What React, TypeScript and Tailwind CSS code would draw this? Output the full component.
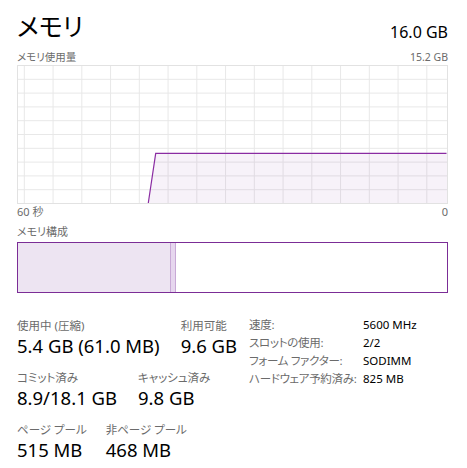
import React from "react";

const font = "font-['Noto_Sans','Noto_Sans_CJK_JP',sans-serif] [font-feature-settings:'palt']";

function Chart() {
  const W = 431;
  const H = 139;
  const hLines = Array.from({ length: 11 }, (_, i) => 0.5 + i * 13.8);
  const vLines = Array.from({ length: 15 }, (_, i) => 7.3 + i * 28.75).filter((x) => x < W - 1);
  const lineY = 88.3;
  return (
    <svg width={W} height={H} className="block">
      {hLines.map((y, i) => (
        <line key={"h" + i} x1={0} x2={W} y1={y} y2={y} stroke="#e8e8e8" strokeWidth={1} />
      ))}
      {vLines.map((x, i) => (
        <line key={"v" + i} x1={x} x2={x} y1={0} y2={H} stroke="#e8e8e8" strokeWidth={1} />
      ))}
      <polygon
        points={`131.3,${H - 1} 138.7,${lineY} ${W - 1},${lineY} ${W - 1},${H - 1}`}
        fill="rgba(120,40,150,0.06)"
      />
      <polyline
        points={`131.3,${H - 1} 138.7,${lineY} ${W - 1.5},${lineY}`}
        fill="none"
        stroke="#8a2ca2"
        strokeWidth={1.2}
      />
      <rect x={0.5} y={0.5} width={W - 1} height={H - 1} fill="none" stroke="#e2e2e2" />
    </svg>
  );
}

function Stat({ label, value }: { label: string; value: string }) {
  return (
    <div className="flex flex-col">
      <div className="text-[11.5px] leading-[16px] text-[#6b6b6b] whitespace-nowrap">{label}</div>
      <div className="text-[18.5px] leading-[24px] text-black whitespace-nowrap">{value}</div>
    </div>
  );
}

export default function App() {
  const info: [string, string][] = [
    ["速度:", "5600 MHz"],
    ["スロットの使用:", "2/2"],
    ["フォーム ファクター:", "SODIMM"],
    ["ハードウェア予約済み:", "825 MB"],
  ];
  return (
    <div className={`w-[467px] h-[468px] bg-white pl-[17px] pr-[19px] pt-[10px] overflow-hidden ${font}`}>
      <div className="flex justify-between items-end h-[32px]">
        <div className="text-[25px] leading-[32px] text-black">メモリ</div>
        <div className="text-[16px] leading-[20px] text-black">16.0 GB</div>
      </div>
      <div className="flex justify-between mt-[8px] h-[15px] text-[10.5px] leading-[15px] text-[#6b6b6b]">
        <span>メモリ使用量</span>
        <span>15.2 GB</span>
      </div>
      <Chart />
      <div className="flex justify-between h-[16px] text-[11px] leading-[16px] text-[#6b6b6b]">
        <span>60 秒</span>
        <span>0</span>
      </div>
      <div className="mt-[4px] h-[16px] text-[11px] leading-[16px] text-[#6b6b6b]">メモリ構成</div>
      <div className="mt-[2px] h-[51px] flex border border-[#7b2d96]">
        <div className="w-[152px] bg-[#ede4f2]" />
        <div className="w-[6px] bg-[#e6d6ee] border-x border-[#c8a9d6]" />
        <div className="flex-1 bg-white" />
      </div>
      <div className="mt-[25px] flex items-start">
        <div className="w-[232px] flex flex-col gap-[12px]">
          <div className="flex gap-[21px]">
            <Stat label="使用中 (圧縮)" value="5.4 GB (61.0 MB)" />
            <Stat label="利用可能" value="9.6 GB" />
          </div>
          <div className="flex gap-[21px]">
            <Stat label="コミット済み" value="8.9/18.1 GB" />
            <Stat label="キャッシュ済み" value="9.8 GB" />
          </div>
          <div className="flex gap-[19px]">
            <Stat label="ページ プール" value="515 MB" />
            <Stat label="非ページ プール" value="468 MB" />
          </div>
        </div>
        <div className="grid grid-cols-[114px_auto] -mt-[2px] text-[11.5px] leading-[18px]">
          {info.map(([k, v]) => (
            <React.Fragment key={k}>
              <div className="text-[#6b6b6b] whitespace-nowrap tracking-[-0.3px]">{k}</div>
              <div className="text-black whitespace-nowrap">{v}</div>
            </React.Fragment>
          ))}
        </div>
      </div>
    </div>
  );
}
